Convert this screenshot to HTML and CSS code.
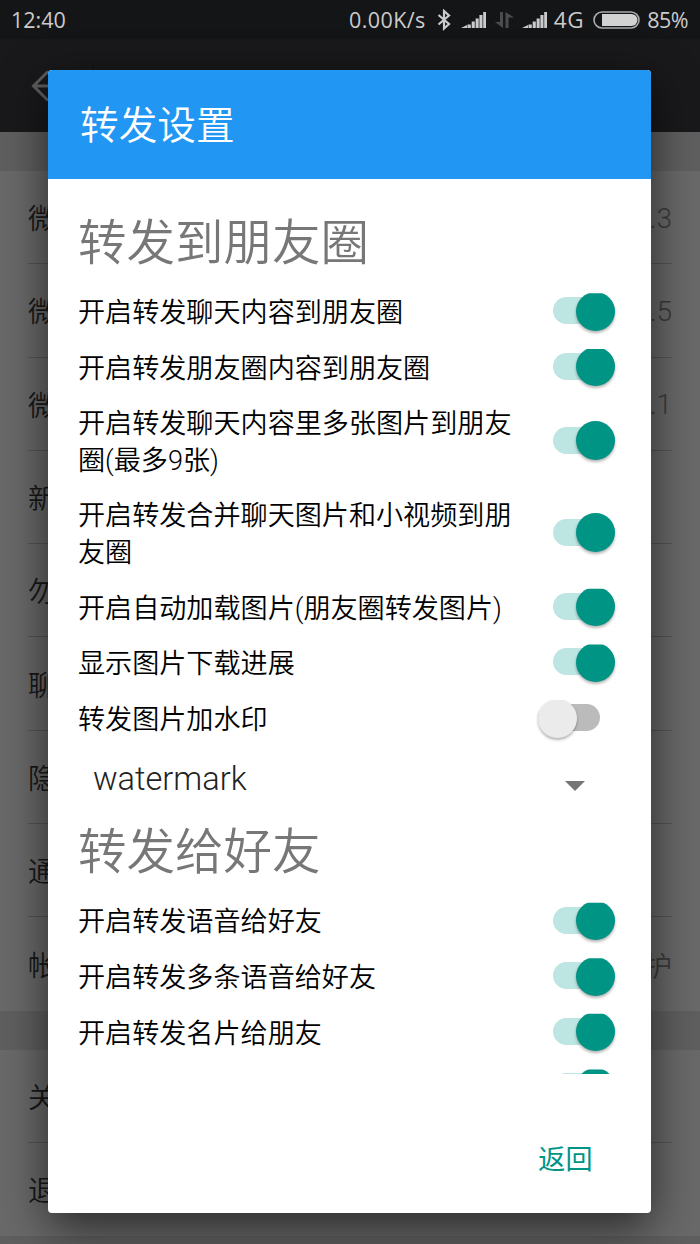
FILE: index.html
```html
<!DOCTYPE html>
<html lang="zh-CN">
<head>
  <meta charset="UTF-8">
  <title>转发设置</title>
  <link rel="stylesheet" href="styles.css">
</head>
<body>

  <!-- Status bar -->
  <div class="status-bar">
    <span class="time">12:40</span>
    <span class="speed">0.00K/s</span>
    <svg class="bluetooth" width="14" height="22" viewBox="0 0 14 22">
      <path d="M1.5 6 L12 15 L7 19.5 V2 L12 6.5 L1.5 15.5" fill="none" stroke="#cbcbcb" stroke-width="2.2"/>
    </svg>
    <svg class="signal" width="26" height="17" viewBox="0 0 26 17">
      <path d="M0 17 L6 14 V17Z M6.500 13.500h3.300v3.500H6.500z M10.700 10.500h3.100v6.500h-3.100z M14.600 7.500h3.100v9.500h-3.100z M18.400 4h3.100v13h-3.100z M22.200 1H25v16h-2.800z" fill="#cbcbcb"/>
    </svg>
    <svg class="data" width="19" height="18" viewBox="0 0 19 18">
      <path d="M5 1h3v16L0 11h5z M10.5 17V1L19 6.500H13.500V17z" fill="#4b4c4e"/>
    </svg>
    <svg class="signal" width="26" height="17" viewBox="0 0 26 17">
      <path d="M0 17 L6 14 V17Z M6.500 13.500h3.300v3.500H6.500z M10.700 10.500h3.100v6.500h-3.100z M14.600 7.500h3.100v9.500h-3.100z M18.400 4h3.100v13h-3.100z M22.200 1H25v16h-2.800z" fill="#cbcbcb"/>
    </svg>
    <span class="network">4G</span>
    <svg class="battery" width="48" height="18" viewBox="0 0 48 18">
      <rect x="1" y="1" width="45" height="16" rx="8" fill="none" stroke="#aaa" stroke-width="1.6"/>
      <path d="M9 3h29.500a6 6 0 0 1 0 12H9z" fill="#d2d2d2"/>
    </svg>
    <span class="percent">85%</span>
  </div>

  <div class="app-bar">
    <svg width="30" height="32" viewBox="0 0 30 32">
      <path d="M17 1.500 L2.500 16 L17 30.500 M2.500 16H30" fill="none" stroke="#5e5e5f" stroke-width="3"/>
    </svg>
    <span class="divider"></span>
  </div>

  <!-- Settings list behind the dialog -->
  <div class="list">
    <div class="item"><span>微</span><span class="value">.3</span></div>
    <div class="item"><span>微</span><span class="value">.5</span></div>
    <div class="item"><span>微</span><span class="value">.1</span></div>
    <div class="item"><span>新</span></div>
    <div class="item"><span>勿</span></div>
    <div class="item"><span>聊</span></div>
    <div class="item"><span>隐</span></div>
    <div class="item"><span>通</span></div>
    <div class="item"><span>帐</span><span class="value">护</span></div>
  </div>
  <div class="list">
    <div class="item"><span>关</span></div>
    <div class="item"><span>退</span></div>
  </div>

  <div class="dialog">
    <div class="dialog-title">转发设置</div>
    <div class="dialog-body">
      <h2>转发到朋友圈</h2>
      <div class="option"><span class="label">开启转发聊天内容到朋友圈</span><span class="switch on"></span></div>
      <div class="option"><span class="label">开启转发朋友圈内容到朋友圈</span><span class="switch on"></span></div>
      <div class="option tall"><span class="label">开启转发聊天内容里多张图片到朋友圈(最多9张)</span><span class="switch on"></span></div>
      <div class="option tall"><span class="label">开启转发合并聊天图片和小视频到朋友圈</span><span class="switch on"></span></div>
      <div class="option"><span class="label">开启自动加载图片(朋友圈转发图片)</span><span class="switch on"></span></div>
      <div class="option"><span class="label">显示图片下载进展</span><span class="switch on"></span></div>
      <div class="option"><span class="label">转发图片加水印</span><span class="switch"></span></div>
      <div class="spinner"><span>watermark</span><span class="arrow"></span></div>
      <h2>转发给好友</h2>
      <div class="option"><span class="label">开启转发语音给好友</span><span class="switch on"></span></div>
      <div class="option"><span class="label">开启转发多条语音给好友</span><span class="switch on"></span></div>
      <div class="option"><span class="label">开启转发名片给朋友</span><span class="switch on"></span></div>
      <div class="option"><span class="label"></span><span class="switch on"></span></div>
    </div>
    <div class="dialog-actions">
      <button type="button">返回</button>
    </div>
  </div>

</body>
</html>
```

FILE: styles.css
```css
:root {
  --accent: #009485;
  --title-bg: #2196f3;
  --row-bg: #696969;
  --gap-bg: #5f5f5f;
}

* {
  box-sizing: border-box;
}

body {
  margin: 0;
  height: 1244px;
  overflow: hidden;
  background: var(--gap-bg);
  font-family: Roboto, "Noto Sans CJK SC", sans-serif;
  font-weight: 350;
}

/* Status bar */
.status-bar {
  height: 39px;
  padding: 0 12px 0 11px;
  display: flex;
  align-items: center;
  background: #141517;
  color: #cbcbcb;
  font-family: "Open Sans", sans-serif;
  font-size: 21.5px;
  font-weight: 400;
  white-space: nowrap;
}

.time {
  flex: 1;
}

.speed {
  letter-spacing: 0.4px;
}

.bluetooth {
  margin: 0 10px 0 11px;
}

.data {
  margin: 0 8px;
}

.network {
  margin-left: 6px;
  font-size: 22.5px;
  letter-spacing: 0.6px;
}

.battery {
  margin: 0 6px 0 9px;
}

.percent {
  letter-spacing: -0.5px;
}

.app-bar {
  height: 93px;
  padding-left: 31px;
  display: flex;
  align-items: center;
  background: #19191b;
}

.app-bar .divider {
  width: 1px;
  height: 46px;
  margin-left: 32px;
  background: #111113;
}

/* List */
.list {
  margin-top: 39px;
  background: var(--row-bg);
}

.item {
  height: 93.3px;
  margin: 0 28px;
  display: flex;
  align-items: center;
  justify-content: space-between;
  border-bottom: 1px solid #555;
  color: #181818;
  font-size: 28px;
}

.item:last-child {
  border-bottom-color: transparent;
}

.item .value {
  padding-top: 2px;
  color: #3b3b3b;
  font-size: 28px;
}

/* Dialog */
.dialog {
  position: absolute;
  top: 70px;
  left: 48px;
  width: 602.5px;
  height: 1143px;
  display: flex;
  flex-direction: column;
  background: #fff;
  border-radius: 4px;
  overflow: hidden;
  box-shadow: 0 14px 46px rgba(0, 0, 0, 0.62);
}

.dialog-title {
  height: 109px;
  padding-left: 32px;
  background: var(--title-bg);
  color: #fff;
  font-size: 38.7px;
  line-height: 111px;
}

.dialog-body {
  height: 895px;
  padding: 32px 30px 0;
  overflow: hidden;
}

h2 {
  height: 73px;
  margin: 0;
  color: #777;
  font-size: 48.5px;
  font-weight: 350;
  line-height: 65px;
}

.option {
  height: 55.6px;
  padding-right: 6px;
  display: flex;
  align-items: center;
  justify-content: space-between;
}

.option.tall {
  height: 92.2px;
}

.label {
  width: 450px;
  padding-top: 3px;
  color: #000;
  font-size: 27.1px;
  line-height: 36.6px;
}

.switch {
  position: relative;
  width: 62px;
  height: 37px;
  clip-path: inset(0 -6px -8px -6px);
}

.tall .switch {
  clip-path: none;
}

.switch::before {
  content: "";
  position: absolute;
  top: 4px;
  left: 0;
  width: 62px;
  height: 27px;
  border-radius: 14px;
  background: #bbb;
}

.switch::after {
  content: "";
  position: absolute;
  top: -1.5px;
  left: 0;
  width: 39px;
  height: 39px;
  border-radius: 50%;
  background: #ebebeb;
  box-shadow: 0 2px 3px rgba(0, 0, 0, 0.3);
}

.switch:not(.on) {
  margin-right: 15px;
}

.switch.on::before {
  background: #bde5e1;
}

.switch.on::after {
  left: 23px;
  background: var(--accent);
}

.spinner {
  height: 74px;
  padding: 0 36px 9px 15px;
  display: flex;
  align-items: center;
  justify-content: space-between;
  color: #222;
  font-size: 32.6px;
}

.arrow {
  margin-top: 14px;
  border: 10px solid transparent;
  border-top-color: #757575;
  border-bottom: none;
}

.dialog-actions {
  flex: 1;
  padding: 60px 58px 0;
  text-align: right;
}

.dialog-actions button {
  padding: 0;
  border: none;
  background: none;
  color: var(--accent);
  font: 400 27.1px/48px "Noto Sans CJK SC", sans-serif;
}
```
